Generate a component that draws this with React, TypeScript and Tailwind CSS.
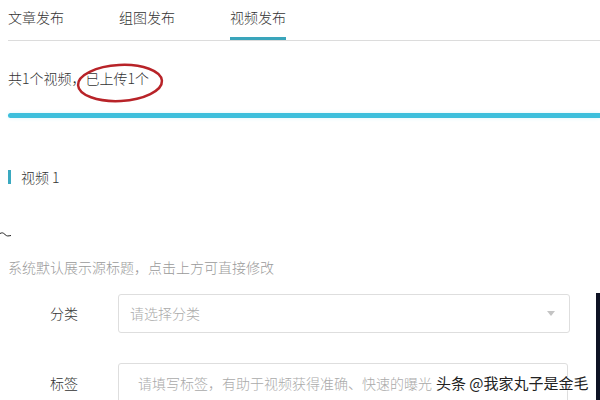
const tabs = ['文章发布', '组图发布', '视频发布']

export default function App() {
  return (
    <div
      className="relative w-[600px] h-[400px] overflow-hidden bg-white pl-2 text-[14px] font-light text-[#333]"
      style={{ fontFamily: '"Noto Sans CJK SC", "Noto Sans", sans-serif' }}
    >
      {/* Tabs */}
      <div className="flex h-[41px] gap-[55px] border-b border-[#dcdcdc]">
        {tabs.map((t, i) => (
          <div
            key={t}
            className={
              'h-[40px] pt-[7px] leading-[20px] ' +
              (i === 2 ? 'border-b-[3px] border-[#3aa5bb]' : '')
            }
          >
            {t}
          </div>
        ))}
      </div>

      {/* Upload status */}
      <div className="relative mt-[27px] leading-[20px]">
        共1个视频，已上传1个
        <svg
          className="absolute left-[67px] top-[-6px]"
          width="90"
          height="42"
          viewBox="0 0 90 42"
          fill="none"
        >
          <ellipse
            cx="45"
            cy="21"
            rx="42"
            ry="18"
            stroke="#b82328"
            strokeWidth="2.5"
            transform="rotate(-3 45 21)"
          />
        </svg>
      </div>

      {/* Progress */}
      <div className="mt-[25px] h-[5px] rounded-l-full bg-[#3cbfdc] shadow-[0_0_4px_#d8f6fb]" />

      {/* Section title */}
      <div className="mt-[49px] flex items-center gap-[10px] leading-[20px]">
        <div className="h-[14px] w-[3px] bg-[#3aa9c0]" />
        <span>视频 1</span>
      </div>

      <div className="h-[70px] pt-[45px] -ml-2">
        <svg width="12" height="6" viewBox="0 0 12 6" fill="none">
          <path d="M0 1.5 C2 0.5 3 0.5 5 2.5 C7 4.5 8 4 11 3.5" stroke="#222" strokeWidth="1" />
        </svg>
      </div>

      <div className="leading-[20px] text-[#9a9a9a]">
        系统默认展示源标题，点击上方可直接修改
      </div>

      {/* Category */}
      <div className="mt-[17px] flex items-center">
        <div className="w-[110px] pl-[42px]">分类</div>
        <div className="flex h-[39px] w-[452px] items-center justify-between rounded-[3px] border border-[#dedede] pl-[11px] pr-[14px] text-[#aaa]">
          <span>请选择分类</span>
          <svg width="8" height="5" viewBox="0 0 8 5">
            <path d="M0 0 H8 L4 5 Z" fill="#c4c4c4" />
          </svg>
        </div>
      </div>

      {/* Tags */}
      <div className="mt-[30px] flex items-center">
        <div className="w-[110px] pl-[42px]">标签</div>
        <div className="flex h-[40px] w-[450px] items-center rounded-[3px] border border-[#dedede] pl-[19px] text-[#aaa]">
          请填写标签，有助于视频获得准确、快速的曝光
        </div>
      </div>

      {/* Watermark */}
      <div className="absolute left-[436px] top-[373px] text-[15px] font-normal leading-[20px] text-[#222] [text-shadow:0_0_2px_#fff]">
        头条 @我家丸子是金毛
      </div>

      <div className="absolute right-0 top-[293px] bottom-0 w-[4px] bg-[#0e1224]" />
    </div>
  )
}
